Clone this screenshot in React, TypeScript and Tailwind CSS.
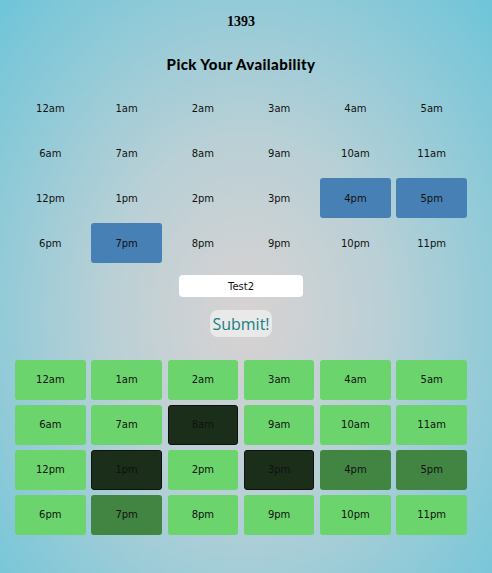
import React from "react";

const hours = [
  "12am","1am","2am","3am","4am","5am","6am","7am","8am","9am","10am","11am",
  "12pm","1pm","2pm","3pm","4pm","5pm","6pm","7pm","8pm","9pm","10pm","11pm",
];

const selected = new Set(["4pm", "5pm", "7pm"]);
const dark = new Set(["8am", "1pm", "3pm"]);
const mid = new Set(["4pm", "5pm", "7pm"]);

export default function App() {
  return (
    <div className="min-h-screen w-full bg-[radial-gradient(ellipse_at_50%_55%,#d9d2d2_0%,#b9d0d6_40%,#6ec5d9_100%)]">
      <div className="w-[482px] flex flex-col items-center">
        <div className="pt-[13px] h-[36px] text-[14px] font-bold text-black leading-[18px] font-['Liberation_Serif',serif]">
          1393
        </div>
        <div className="mt-[19px] text-[15px] font-black tracking-[0.4px] text-black leading-[18px] font-['Lato',sans-serif]">
          Pick Your Availability
        </div>
        <div className="mt-[15px] w-[452px] grid grid-cols-6 gap-x-[5.6px] gap-y-[5px] font-['DejaVu_Sans',sans-serif]">
          {hours.map((h) => (
            <div
              key={h}
              className={`h-[40px] rounded-[3px] flex items-center justify-center text-[10px] text-[#111] ${selected.has(h) ? "bg-[#4780b5]" : ""}`}
            >
              {h}
            </div>
          ))}
        </div>
        <div className="mt-[12px] w-[124px] h-[22px] rounded-[4px] bg-white flex items-center justify-center text-[10px] text-[#111] font-['DejaVu_Sans',sans-serif]">
          Test2
        </div>
        <div className="mt-[13px] w-[62px] h-[27px] rounded-[8px] bg-[#ebebeb]/90 flex items-center justify-center text-[16px] font-medium text-[#17807f] font-['Open_Sans',sans-serif]">
          Submit!
        </div>
        <div className="mt-[23px] w-[452px] grid grid-cols-6 gap-x-[5.6px] gap-y-[5.5px] font-['DejaVu_Sans',sans-serif]">
          {hours.map((h) => (
            <div
              key={h}
              className={`h-[39.5px] rounded-[3px] flex items-center justify-center text-[10px] text-[#111] ${dark.has(h) ? "bg-[#1a2e1a] border border-[#111]" : mid.has(h) ? "bg-[#428542]" : "bg-[#6cd46c]"}`}
            >
              {h}
            </div>
          ))}
        </div>
      </div>
    </div>
  );
}
